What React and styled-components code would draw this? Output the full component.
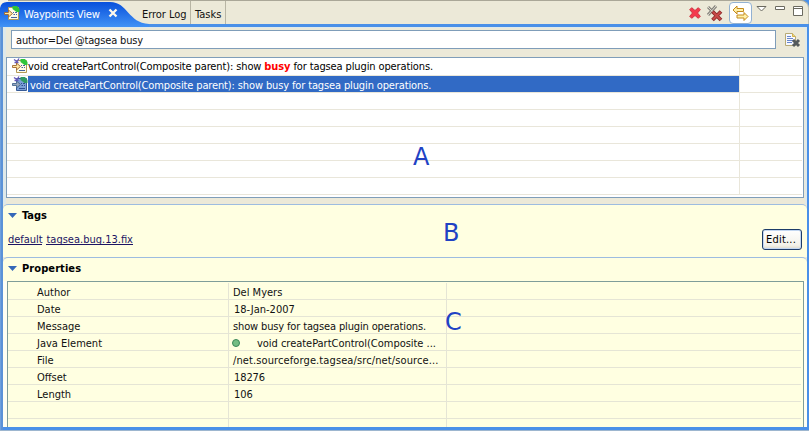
import React from 'react';
import styled, { createGlobalStyle } from 'styled-components';

const Global = createGlobalStyle`
  * { box-sizing: border-box; }
  body { margin: 0; background: #ece9d8; }
`;
const Window = styled.div`
  position: relative; width: 809px; height: 431px; overflow: hidden;
  display: flex; flex-direction: column;
  background: linear-gradient(90deg, #6fa0dc 1px, #5b92d8 1px 3px, #4a90e8 3px);
  border-bottom: 1px solid #9db6cf;
  font: 11px/13px "DejaVu Sans Condensed", "DejaVu Sans", sans-serif; font-stretch: condensed; color: #111; white-space: pre;
`;
const Label = styled.span`
  display: block; flex: none; letter-spacing: ${p => p.$ls || 0}px; margin-left: ${p => p.$x || 0}px;
`;
const TabBar = styled.header`
  flex: none; height: 24px; display: flex; background: #ece9d8;
  border-top: 1px solid #aaa798; border-right: 1px solid #c4c1b0; border-top-right-radius: 8px;
`;
const ActiveTab = styled.div`
  width: 142px; height: 26px; margin-top: -1px; display: flex; flex: none; position: relative; color: #fff;
`;
const TabShape = styled.svg`position: absolute; left: 0; top: 0;`;
const ActiveContent = styled.div`
  position: relative; display: flex; padding: 5px 0 0 4px;
  ${Label} { padding-top: 3px; font-size: 11.2px; }
`;
const CloseIcon = styled.svg`margin: 3px 0 0 8px;`;
const Tab = styled.div`
  position: relative; flex: none; width: ${p => p.$w}px; height: 23px; padding: 7px 0 0 ${p => p.$pad}px;
  border-right: 1px solid #b8b5a4;
`;
const Tools = styled.div`
  margin-left: auto; display: flex; align-items: flex-start; width: 120px; height: 24px;
`;
const Tool = styled.div`
  flex: none; width: ${p => p.$w || 24}px; height: 22px; display: flex; align-items: flex-start; justify-content: center;
  padding-top: ${p => p.$top || 0}px;
`;
const ToggleTool = styled(Tool)`
  width: 23px; margin: 1px 0 0; background: #fff; border: 1px solid #92b1d2; border-radius: 4px;
`;
const Body = styled.main`
  flex: none; height: 400px; margin: 3px 2px 0 3px; display: flex; flex-direction: column; background: #ece9d8;
`;
const SearchPane = styled.section`
  height: 177px; flex: none; background: #ece9d8; border: solid #dfe9ea; border-width: 1px 2px 0 3px;
`;
const SearchRow = styled.div`height: 29px; padding: 2px 0 0 5px; display: flex;`;
const SearchField = styled.div`
  width: 765px; height: 19px; background: #fff; border: 1px solid #7f9db9; padding: 3px 4px; letter-spacing: -.16px; flex: none;
`;
const FilterIcon = styled.svg`margin: 1px 0 0 9px; flex: none;`;
const Table = styled.div`
  height: 141px; width: 798px; background: #fff; border: 1px solid #7f9db9; overflow: hidden;
`;
const Row = styled.div`
  height: ${p => p.$h || 17}px; display: flex; border-bottom: 1px solid #e9e6da; margin-right: 1px;
`;
const RowText = styled.div`
  width: 711px; margin-left: -1px; padding: ${p => p.$selected ? '3px 0 0 2px' : '2px 0 0 0'}; display: flex; flex: none;
  background: ${p => p.$selected ? '#316ac5' : 'transparent'}; color: ${p => p.$selected ? '#fff' : '#000'};
  letter-spacing: ${p => p.$selected ? -.13 : -.12}px;
`;
const IconCell = styled.div`width: 22px; padding-left: 5px; flex: none;`;
const Gutter = styled.div`flex: 1; border-left: 1px solid #e9e6da;`;
const Busy = styled.b`color: #f00; letter-spacing: -.1px;`;
const Section = styled.section`
  height: ${p => p.$h}px; flex: none; background: #ffffe1; border-top: 1px solid #9dbce0; border-radius: 5px 5px 0 0;
`;
const Heading = styled.h2`
  height: ${p => p.$h || 22}px; margin: 0; padding: 4px 0 0 5px; display: flex; font-size: 11px; font-weight: bold;
  line-height: 13px; color: #000; letter-spacing: ${p => p.$ls || 0}px;
`;
const Twistie = styled.svg`margin: 4px 5px 0 0;`;
const TagRow = styled.div`height: 26px; display: flex; padding: 6px 5px 0 5px;`;
const TagLink = styled.a`
  color: #1c1464; border-bottom: 1px solid #1c1464; height: 12px; line-height: 13px; margin-right: 4px;
  letter-spacing: ${p => p.$ls || 0}px;
`;
const Button = styled.button`
  width: 40px; height: 21px; margin: -4px 0 0 auto; padding: 0 0 0 3px; font: inherit; text-align: left; color: #000;
  border: 1px solid #1d3c68; border-radius: 3px; background: linear-gradient(#fff, #f3f2ea 80%, #dcd9ca); letter-spacing: .2px;
  box-shadow: inset 0 0 0 1px #c3d7f1;
`;
const PropertiesFrame = styled.div`
  height: 146px; padding: 0 3px 0 4px; background: #fffff3;
`;
const Properties = styled.div`
  height: 146px; border: 1px solid #7f9d99; border-bottom: 0; overflow: hidden; background: #ffffe1;
`;
const Prop = styled.div`
  height: 17px; margin-right: 2px; display: grid; grid-template-columns: 220px 218px 1fr; border-bottom: 1px solid #e5e5d5;
  &:first-child { height: 18px; padding-top: 1px; }
`;
const Cell = styled.div`
  display: flex; padding: 3px 0 0 ${p => p.$pad || 0}px; border-left: ${p => p.$line ? '1px solid #e5e5d5' : '0'};
`;
const Dot = styled.i`
  width: 8px; height: 8px; margin: 2px 17px 0 -1px; border: 1px solid #3b8659; border-radius: 50%; background: #73bd83;
`;
const Callout = styled.span`
  position: absolute; left: ${p => p.$left}px; top: ${p => p.$top}px; font: 24px/28px "DejaVu Sans", sans-serif; color: #2142c4;
`;

const WaypointIcon = ({ selected, plain }) => (
  <svg width="16" height="16" viewBox="0 0 16 16">
    <path d="M4.5 5.5v-3h10v12h-10v-3" fill={selected ? '#7b9fd6' : '#fffbe6'} stroke={selected ? '#365a96' : '#b39a55'} />
    {!plain && <path d="M2 1.5l3 2 2-3M2.5 4.5h4" stroke="#6658b8" fill="none" strokeWidth="1.3" />}
    <path d="M.5 7.5h4V5l4 3.5-4 3.5V9.5h-4z" fill={selected ? '#97a7bc' : '#ffe6a0'} stroke={selected ? '#44658f' : '#a0662e'} strokeWidth=".9" />
    <path d="M9 7.5h1M11 7.5h2M9.5 9.5H11M12 9.5h1M7 12.5h6" stroke={selected ? '#2f4f92' : '#46649c'} />
    <path d="M8.5 1h4.5l2.5 3v3h-3L8.5 4z" fill={selected ? '#2f9a62' : '#2fc63a'} />
  </svg>
);

const Cross = ({ fill, stroke, size = 12 }) => (
  <svg width={size} height={size} viewBox="0 0 12 12">
    <path d="M.7 2.7l2-2L6 3.5 9.3.7l2 2L8.5 6l2.8 3.3-2 2L6 8.5l-3.3 2.8-2-2L3.5 6z" fill={fill} stroke={stroke} />
  </svg>
);

const Triangle = () => (
  <Twistie width="9" height="5" viewBox="0 0 9 5"><path d="M0 0h9L4.5 5z" fill="#3568b8" /></Twistie>
);

const rows = [
  ['Author', 'Del Myers', 4, 0], ['Date', '18-Jan-2007', 5, 0], ['Message', 'show busy for tagsea plugin operations.', 4, -.14],
  ['Java Element', 'void createPartControl(Composite ...', 4, -.03], ['File', '/net.sourceforge.tagsea/src/net/source...', 4, .11],
  ['Offset', '18276', 5, -.1], ['Length', '106', 5, 0], ['', ''], ['', ''],
];

export default function App() {
  return <><Global /><Window>
    <TabBar>
      <ActiveTab>
        <TabShape width="151" height="27" viewBox="0 0 151 27">
          <defs><linearGradient id="tab" x2="0" y2="1"><stop stopColor="#0850dc" /><stop offset="1" stopColor="#4192f5" /></linearGradient></defs>
          <path d="M0 0h8v8H0z" fill="#f4f2e8" />
          <path d="M0 27V8Q1 2 7 2H110C128 2 128 23 149 24V27z" fill="url(#tab)" />
        </TabShape>
        <ActiveContent><WaypointIcon plain /><Label $x={4} $ls={-.26}>Waypoints View</Label>
          <CloseIcon width="10" height="10" viewBox="0 0 10 10"><path d="M1.5 1.5l7 7M8.5 1.5l-7 7" stroke="#fff9ec" strokeWidth="2.3" /></CloseIcon>
        </ActiveContent>
      </ActiveTab>
      <Tab $w={49} $pad={0}><Label $ls={-.05}>Error Log</Label></Tab><Tab $w={35} $pad={4}><Label>Tasks</Label></Tab>
      <Tools>
        <Tool $w={13} $top={6}><Cross fill="#f5394c" stroke="#cf3440" /></Tool>
        <Tool $w={28} $top={4}>
          <svg width="16" height="17" viewBox="0 0 16 17">
            <path d="M1 2l8 8M9 1L1 10" stroke="#85837c" strokeWidth="3" /><path d="M1 2l8 8M9 1L1 10" stroke="#dedbd0" />
            <path d="M5.5 6.5l8.5 8.5M14 6.5L5.5 15" stroke="#8e2b2b" strokeWidth="3.8" /><path d="M6 7l7.5 7.5M13.5 7L6 14.5" stroke="#c84a48" strokeWidth="2" />
          </svg>
        </Tool>
        <ToggleTool $top={2}>
          <svg width="17" height="17" viewBox="0 0 17 17" fill="#fff0a8" stroke="#c48a1c">
            <path d="M1 5l4-4v2.5h6.5v3H5V9z" /><path d="M16 11.5l-4-4V10H5v3h7v2.5z" />
          </svg>
        </ToggleTool>
        <Tool $w={18} $top={5}><svg width="11" height="6" viewBox="0 0 11 6"><path d="M1 .5h9L5.5 5z" fill="#fff" stroke="#6b6a60" /></svg></Tool>
        <Tool $w={20} $top={5}><svg width="10" height="4" viewBox="0 0 10 4"><path d="M.5.5h9v3h-9z" fill="#fff" stroke="#6b6a60" /></svg></Tool>
        <Tool $w={16} $top={5}><svg width="10" height="10" viewBox="0 0 10 10"><path d="M.5.5h9v9h-9zM0 2.5h10" fill="#fff" stroke="#6b6a60" /></svg></Tool>
      </Tools>
    </TabBar>
    <Body>
      <SearchPane>
        <SearchRow>
          <SearchField>author=Del @tagsea busy</SearchField>
          <FilterIcon width="16" height="17" viewBox="0 0 16 17">
            <path d="M.5 2.5h7l3 3v9H.5z" fill="#f7f8ff" stroke="#b7aa75" /><path d="M7.5 2.5v3h3" fill="#efd57d" stroke="#d2b24d" />
            <path d="M2 5.5h4M2 7.5h6M2 9.5h6M2 11.5h5" stroke="#6887cd" />
            <path d="M8 9l6 6M14 9l-6 6" stroke="#555a5c" strokeWidth="3" />
          </FilterIcon>
        </SearchRow>
        <Table>
          <Row $h={18}><IconCell><WaypointIcon /></IconCell><RowText>void createPartControl(Composite parent): show <Busy>busy</Busy> for tagsea plugin operations.</RowText><Gutter /></Row>
          <Row><IconCell><WaypointIcon selected /></IconCell><RowText $selected>void createPartControl(Composite parent): show busy for tagsea plugin operations.</RowText><Gutter /></Row>
          {[1, 2, 3, 4, 5, 6].map(i => <Row key={i}><IconCell /><RowText /><Gutter /></Row>)}
        </Table>
      </SearchPane>
      <Section $h={53}>
        <Heading><Triangle />Tags</Heading>
        <TagRow><TagLink $ls={-.05}>default</TagLink><TagLink>tagsea.bug.13.fix</TagLink><Button>Edit...</Button></TagRow>
      </Section>
      <Section $h={170}>
        <Heading $h={23} $ls={.08}><Triangle />Properties</Heading>
        <PropertiesFrame><Properties>
          {rows.map(([name, value, pad, ls], i) => (
            <Prop key={i}>
              <Cell $pad={29}>{name}</Cell>
              <Cell $line $pad={pad}>{i === 3 && <Dot />}<Label $ls={ls}>{value}</Label></Cell>
              <Cell $line />
            </Prop>
          ))}
        </Properties></PropertiesFrame>
      </Section>
    </Body>
    <Callout $left={413} $top={143}>A</Callout><Callout $left={443} $top={219}>B</Callout><Callout $left={445} $top={308}>C</Callout>
  </Window></>;
}
